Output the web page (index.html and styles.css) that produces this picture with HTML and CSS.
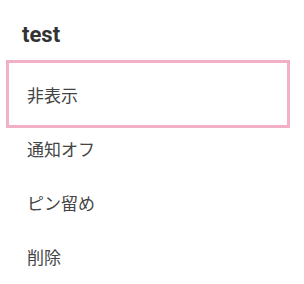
FILE: index.html
```html
<!DOCTYPE html>
<html>
<head>
    <link rel="stylesheet" href="styles.css">
</head>
<body>
    <div class="menu-dialog">
        <div class="menu-title">test</div>
        <ul class="menu-list">
            <li class="menu-item focused">非表示</li>
            <li class="menu-item">通知オフ</li>
            <li class="menu-item">ピン留め</li>
            <li class="menu-item">削除</li>
        </ul>
    </div>
</body>
</html>
```
FILE: styles.css
```css
body {
    margin: 0;
    padding: 0;
    background-color: #fff;
    font-family: Roboto, "Noto Sans CJK JP", sans-serif;
}

.menu-dialog {
    width: 304px;
    height: 284px;
    padding-top: 22px;
    box-sizing: border-box;
}

.menu-title {
    font-size: 22px;
    font-weight: bold;
    line-height: 26px;
    color: #333;
    padding-left: 22px;
    margin-bottom: 19px;
}

.menu-list {
    list-style: none;
    margin: 0;
    padding: 0 21px 0 13px;
}

.menu-item {
    height: 54px;
    display: flex;
    align-items: center;
    padding-left: 14px;
    font-family: "Noto Sans CJK JP", sans-serif;
    font-size: 17px;
    color: #444;
}

.menu-item.focused {
    outline: 3px solid #f2afc8;
    outline-offset: 4px;
}
```
